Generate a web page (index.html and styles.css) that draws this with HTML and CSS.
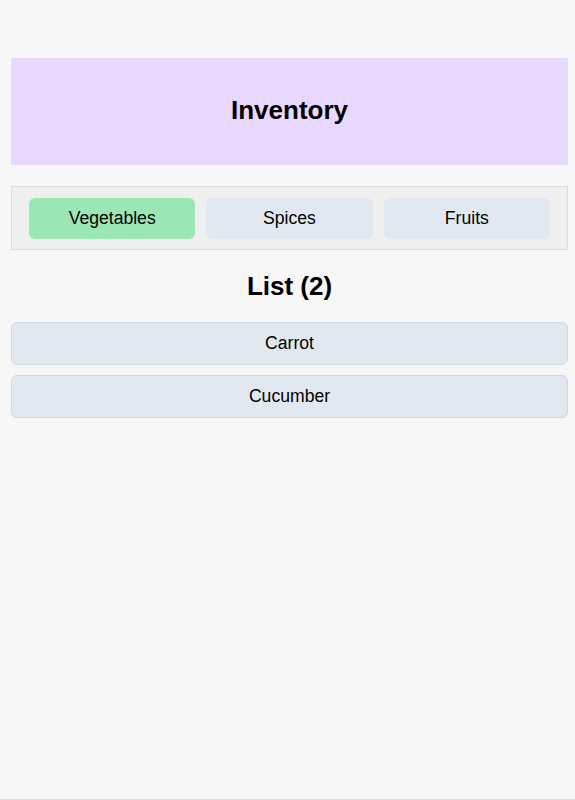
FILE: index.html
```html
<!DOCTYPE html>
<html lang="en">
<head>
<meta charset="utf-8">
<title>Inventory</title>
<link rel="stylesheet" href="styles.css">
</head>
<body>
<div class="page">
  <header class="banner">
    <h1 class="banner-title">Inventory</h1>
  </header>
  <nav class="tabs">
    <button class="tab tab-active">Vegetables</button>
    <button class="tab">Spices</button>
    <button class="tab">Fruits</button>
  </nav>
  <h2 class="list-title">List (2)</h2>
  <ul class="items">
    <li class="item">Carrot</li>
    <li class="item">Cucumber</li>
  </ul>
</div>
</body>
</html>
```

FILE: styles.css
```css
* { box-sizing: border-box; }
html, body { margin: 0; padding: 0; }
body {
  background: #f7f7f7;
  font-family: "Liberation Sans", Arial, sans-serif;
  color: #000;
  min-height: 800px;
  border-bottom: 1px solid #e2e2e2;
}
.page {
  padding: 58px 7px 0 11px;
}
.banner {
  height: 107px;
  background: #e9d8fd;
  display: flex;
  align-items: center;
  justify-content: center;
}
.banner-title {
  margin: 0;
  font-size: 26px;
  font-weight: 700;
  line-height: 30px;
  padding-bottom: 3px;
}
.tabs {
  margin-top: 21px;
  display: flex;
  gap: 11px;
  padding: 11px 17px 10px 17px;
  background: #efefef;
  border: 1px solid #d6dde6;
}
.tab {
  flex: 1;
  border: none;
  border-radius: 6px;
  background: #e2e8f0;
  font-family: "Liberation Sans", Arial, sans-serif;
  font-size: 17.6px;
  line-height: 21px;
  padding: 10px;
  color: #000;
}
.tab-active { background: #9ae6b4; }
.list-title {
  margin: 21px 0 21px;
  text-align: center;
  font-size: 26px;
  line-height: 30px;
  font-weight: 700;
}
.items {
  list-style: none;
  margin: 0;
  padding: 0;
  display: flex;
  flex-direction: column;
  gap: 10px;
}
.item {
  background: #e2e8f0;
  border: 1px solid #cfd8e3;
  border-radius: 6px;
  text-align: center;
  font-size: 17.6px;
  line-height: 21px;
  padding: 10px;
}
```
